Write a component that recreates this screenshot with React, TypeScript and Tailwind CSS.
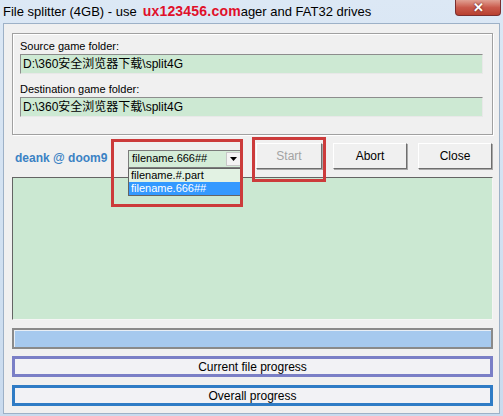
const path = 'D:\\360安全浏览器下载\\split4G'

function FolderField({ label, value, top }: { label: string; value: string; top: string }) {
  return (
    <div className={top}>
      <div className="h-[14px] leading-[14px] text-[11px] text-black">{label}</div>
      <div className="mt-[1px] h-[20px] flex items-center pl-[2px] text-[12px] bg-[#cde9d3] border border-t-[#8d8d8d] border-l-[#8d8d8d] border-r-[#e8e8e8] border-b-[#e8e8e8]">
        {value}
      </div>
    </div>
  )
}

function Button({ label, disabled, width }: { label: string; disabled?: boolean; width: string }) {
  return (
    <button
      className={`${width} h-[26px] text-[12px] bg-[#f0f0f0] border border-t-white border-l-white border-r-[#6e6e6e] border-b-[#6e6e6e] shadow-[1px_1px_0_#a8a8a8] ${
        disabled ? 'text-[#a3a3a3]' : 'text-black'
      }`}
    >
      {label}
    </button>
  )
}

export default function App() {
  return (
    <div
      className="relative w-[503px] h-[416px] overflow-hidden flex flex-col bg-gradient-to-b from-[#dce8f5] to-[#c9dbee]"
      style={{ fontFamily: '"Liberation Sans", "Noto Sans CJK SC", sans-serif' }}
    >
      {/* title bar */}
      <div className="h-[23px] shrink-0 flex items-center pl-[3px] text-[13px] text-black whitespace-nowrap">
        <span>File splitter (4GB) - use</span>
        <span className="inline-block w-[98px] ml-[6px] font-bold text-[14px] text-[#e0102a] tracking-[0.2px]">
          ux123456.com
        </span>
        <span>ager and FAT32 drives</span>
      </div>
      <div className="absolute top-0 right-[2px] w-[46px] h-[16px] rounded-b-[4px] border border-t-0 border-[#7a2e2e] bg-gradient-to-b from-[#e0a093] via-[#c95a4c] to-[#b8402f] flex items-center justify-center">
        <span className="text-white font-bold text-[13px] leading-none [text-shadow:0_0_2px_#4a1010]">✕</span>
      </div>

      {/* client area */}
      <div className="flex-1 mx-[3px] mb-[2px] bg-[#f0f0f0] border border-[#9db1c7] pl-[8px] pr-[6px] pt-[9px] flex flex-col">
        <div className="h-[102px] border border-[#a0a0a0] shadow-[inset_1px_1px_0_white,1px_1px_0_white] pl-[7px] pr-[9px] pt-[5px]">
          <FolderField label="Source game folder:" value={path} top="" />
          <FolderField label="Destination game folder:" value={path} top="mt-[8px]" />
        </div>

        <div className="relative mt-[8px] h-[26px] flex items-center">
          <div className="w-[116px] pl-[3px] mt-[3px] text-[12px] font-bold text-[#3b82c4]">deank @ doom9</div>
          <div className="relative w-[115px] h-[18px] mt-[5px] border border-[#7b7b7b] bg-[#d5ecd8] flex items-center">
            <span className="flex-1 pl-[3px] text-[11px] leading-none">filename.666##</span>
            <span className="w-[15px] h-[14px] mr-[1px] bg-[#f4f4f4] border border-[#c8c8c8] flex items-center justify-center">
              <svg width="7" height="4" viewBox="0 0 7 4">
                <polygon points="0,0 7,0 3.5,4" fill="#000" />
              </svg>
            </span>
            <div className="absolute left-[-1px] top-[17px] w-[115px] h-[28px] border border-[#646464] bg-[#e2f2e3] flex flex-col text-[11px]">
              <div className="h-[13px] leading-[13px] pl-[2px]">filename.#.part</div>
              <div className="h-[13px] leading-[13px] pl-[2px] bg-[#3399ff] text-white">filename.666##</div>
            </div>
          </div>
          <div className="ml-[13px]">
            <Button label="Start" disabled width="w-[66px]" />
          </div>
          <div className="ml-[11px]">
            <Button label="Abort" width="w-[74px]" />
          </div>
          <div className="ml-[11px]">
            <Button label="Close" width="w-[74px]" />
          </div>
        </div>

        {/* log */}
        <div className="mt-[8px] h-[143px] bg-[#cbe8d2] border border-t-[#646464] border-l-[#646464] border-r-[#f5f5f5] border-b-[#f5f5f5]" />

        {/* progress */}
        <div className="mt-[8px] h-[21px] border-2 border-[#8a8a8a] bg-[#a6c9ee] shadow-[inset_1px_1px_0_#e8eef5]" />
        <div className="mt-[7px] h-[21px] border-[3px] border-[#7a7fc6] bg-[#f2f2f5] flex items-center justify-center text-[12px]">
          Current file progress
        </div>
        <div className="mt-[8px] h-[21px] border-[3px] border-[#2f7cc5] bg-[#f2f2f5] flex items-center justify-center text-[12px]">
          Overall progress
        </div>
      </div>

      {/* red marker boxes */}
      <div className="absolute left-[111px] top-[139px] w-[132px] h-[68px] border-[3px] border-[#cc3b3b]" />
      <div className="absolute left-[252px] top-[137px] w-[74px] h-[45px] border-[3px] border-[#cc3b3b]" />
    </div>
  )
}
